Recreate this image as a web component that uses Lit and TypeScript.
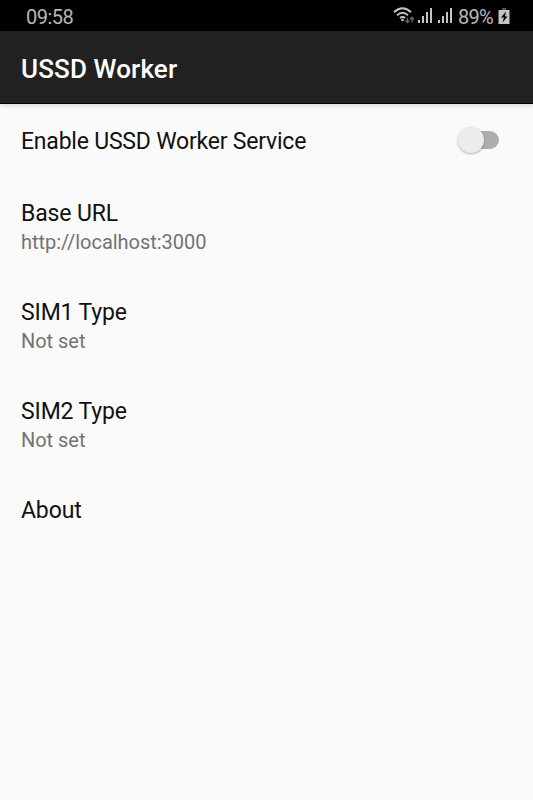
import { LitElement, html, css, svg } from "lit";
import { customElement } from "lit/decorators.js";

const bars = svg`<path d="M0 12h2v3H0zM4 8h2v7H4zM8 4h2v11H8zM12 0h2v15h-2z" fill="#c4c4c4"/>`;

@customElement("app-root")
export class AppRoot extends LitElement {
  static styles = css`
    :host { display: block; height: 100vh; overflow: hidden; background: #fafafa; color: #111; font-family: Roboto, sans-serif; }
    * { box-sizing: border-box; }
    .status { height: 31px; background: #000; color: #b8b8b8; display: flex; align-items: center; padding: 3px 23px 0 26px; font-size: 20px; line-height: 28px; letter-spacing: -0.5px; }
    .time { flex: 1; }
    .wifi { width: 22px; height: 18px; margin-bottom: 2px; }
    .sig { width: 14px; height: 16px; margin: 0 0 2px 6px; }
    .wifi + .sig { margin-left: 3px; }
    .pct { margin-left: 6px; width: 35px; letter-spacing: -0.8px; }
    .bat { width: 12px; height: 16px; margin: 0 0 2px 5px; }
    .bar { position: relative; height: 73px; background: #212121; border-bottom: 1px solid #000; color: #fff; display: flex; align-items: center; padding: 3px 21px 0; font-size: 26px; font-weight: 500; letter-spacing: 0.13px; box-shadow: 0 1px 5px rgba(0,0,0,.18); }
    .row { height: 99px; padding: 22px 21px 0; }
    .switchrow { height: 73px; display: flex; align-items: center; justify-content: space-between; padding: 1px 34px 0 21px; }
    .switchrow .title { padding-top: 2px; letter-spacing: -0.21px; }
    .title { font-size: 23px; line-height: 30px; letter-spacing: -0.13px; }
    .sub { font-size: 20px; line-height: 26px; color: #737373; letter-spacing: -0.03px; }
    .switch { width: 42px; height: 32px; overflow: visible; }
    .thumb { filter: drop-shadow(0 1px 1px rgba(0,0,0,.3)); }
  `;

  row(title: string, sub = "") {
    return html`<div class="row"><div class="title">${title}</div><div class="sub">${sub}</div></div>`;
  }

  render() {
    return html`
      <div class="status">
        <span class="time">09:58</span>
        <svg class="wifi" viewBox="0 0 22 18"><path d="M1 5.200Q9.500-2.500 18 5.200M4 8.200Q9.500 3.500 15 8.200M7 11Q9.500 8.800 12 11" fill="none" stroke="#c4c4c4" stroke-width="1.900"/><circle cx="9.500" cy="13" r="1.300" fill="#c4c4c4"/><path d="M14.500 10.500v5m-2-2l2 2 2-2M19 15.500v-5m-2 2l2-2 2 2" fill="none" stroke="#666" stroke-width="1.300"/></svg>
        <svg class="sig" viewBox="0 0 14 16">${bars}</svg>
        <svg class="sig" viewBox="0 0 14 16">${bars}</svg>
        <span class="pct">89%</span>
        <svg class="bat" viewBox="0 0 12 16"><path d="M4 0h4v2H4z" fill="#555"/><path d="M.500 2h11v14H.500z" fill="#c4c4c4"/><path d="M8 3.500L3 9.500h3L4.500 14.500l5-6H7z" fill="#000"/></svg>
      </div>
      <div class="bar">USSD Worker</div>
      <div class="switchrow">
        <span class="title">Enable USSD Worker Service</span>
        <svg class="switch" viewBox="0 0 42 32"><rect x="5" y="6" width="37" height="18" rx="9" fill="#adadad"/><circle class="thumb" cx="14" cy="15" r="13" fill="#ececec"/></svg>
      </div>
      ${this.row("Base URL", "http://localhost:3000")}
      ${this.row("SIM1 Type", "Not set")}
      ${this.row("SIM2 Type", "Not set")}
      ${this.row("About")}
    `;
  }
}
